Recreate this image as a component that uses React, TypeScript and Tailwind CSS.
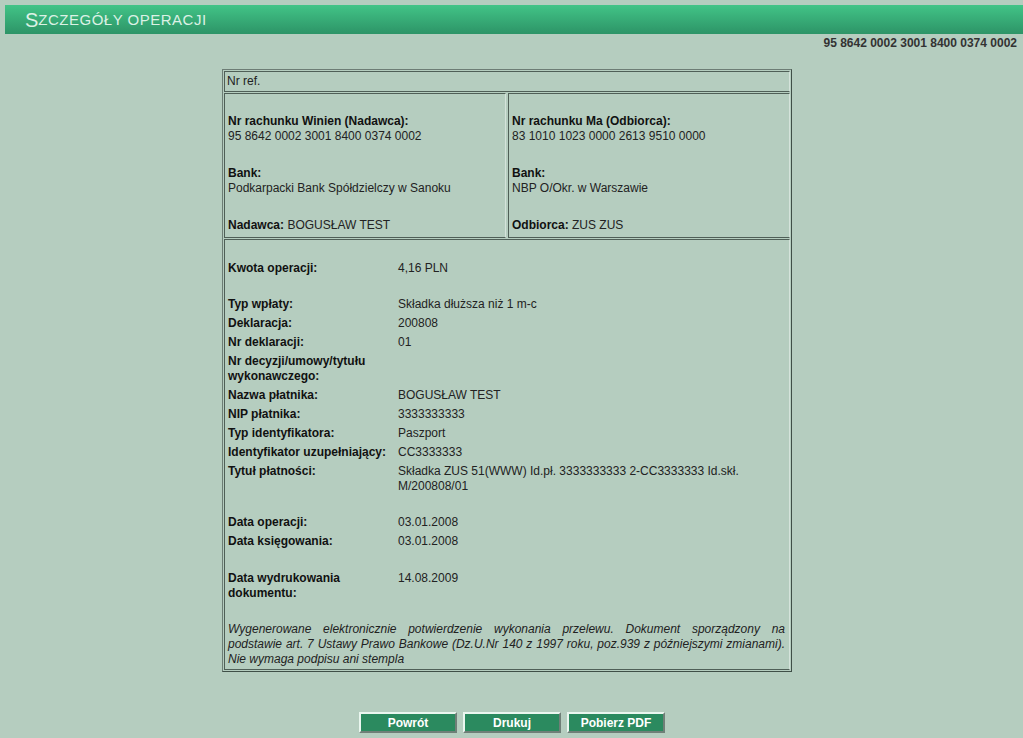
import { memo } from "react";

const rows: { label: string; value?: string; gap?: number }[] = [
  { label: "Kwota operacji:", value: "4,16 PLN" },
  { label: "Typ wpłaty:", value: "Składka dłuższa niż 1 m-c", gap: 17 },
  { label: "Deklaracja:", value: "200808" },
  { label: "Nr deklaracji:", value: "01" },
  { label: "Nr decyzji/umowy/tytułu wykonawczego:" },
  { label: "Nazwa płatnika:", value: "BOGUSŁAW TEST" },
  { label: "NIP płatnika:", value: "3333333333" },
  { label: "Typ identyfikatora:", value: "Paszport" },
  { label: "Identyfikator uzupełniający:", value: "CC3333333" },
  { label: "Tytuł płatności:", value: "Składka ZUS 51(WWW) Id.pł. 3333333333 2-CC3333333 Id.skł. M/200808/01" },
  { label: "Data operacji:", value: "03.01.2008", gap: 17 },
  { label: "Data księgowania:", value: "03.01.2008" },
  { label: "Data wydrukowania dokumentu:", value: "14.08.2009", gap: 18 },
];

function Party({ title, account, bank, whoLabel, who }: { title: string; account: string; bank: string; whoLabel: string; who: string }) {
  return (
    <div className="flex-1 border border-t-[#4f5f57] border-l-[#4f5f57] border-b-[#4f5f57] border-r-[#d5e3db] pl-[3px] pt-[20px] pb-[4px] leading-[15px]">
      <div className="font-bold text-[#111]">{title}</div>
      <div>{account}</div>
      <div className="mt-[22px] font-bold text-[#111]">Bank:</div>
      <div>{bank}</div>
      <div className="mt-[22px]">
        <span className="font-bold text-[#111]">{whoLabel}</span> {who}
      </div>
    </div>
  );
}

function App() {
  const cell = "border border-t-[#4f5f57] border-l-[#4f5f57] border-b-[#4f5f57] border-r-[#d5e3db]";
  const just = "block text-justify [text-align-last:justify]";
  return (
    <div className="min-h-[738px] bg-[#b5cdbf] pt-[5px] text-[12px] text-[#222]" style={{ fontFamily: '"Liberation Sans", Arial, sans-serif' }}>
      <div className="ml-[5px] flex h-[29px] items-center bg-gradient-to-b from-[#42c487] to-[#2d9467] pl-[20px] text-[#dcf1e5]">
        <span className="text-[20px] leading-none">S</span>
        <span className="text-[15px] leading-none tracking-[0.5px]">ZCZEGÓŁY OPERACJI</span>
      </div>
      <div className="pr-[6px] pt-[2px] text-right font-bold leading-[14px] text-[#333]">95 8642 0002 3001 8400 0374 0002</div>

      <div className="ml-[222px] mt-[19px] w-[570px] border border-t-[#6d7d75] border-l-[#6d7d75] border-b-[#3f4f47] border-r-[#3f4f47] p-[1px]">
        <div className={`${cell} h-[21px] pl-[2px] leading-[18px]`}>Nr ref.</div>
        <div className="mt-[1px] flex gap-[2px]">
          <Party title="Nr rachunku Winien (Nadawca):" account="95 8642 0002 3001 8400 0374 0002" bank="Podkarpacki Bank Spółdzielczy w Sanoku" whoLabel="Nadawca:" who=" BOGUSŁAW TEST" />
          <Party title="Nr rachunku Ma (Odbiorca):" account="83 1010 1023 0000 2613 9510 0000" bank="NBP O/Okr. w Warszawie" whoLabel="Odbiorca:" who="ZUS ZUS" />
        </div>
        <div className={`${cell} mt-[1px] pl-[3px] pr-[4px] pt-[19px] pb-[2px] leading-[15px]`}>
          {rows.map((r) => (
            <div key={r.label} className="flex py-[2px]" style={r.gap ? { marginTop: r.gap } : undefined}>
              <div className="w-[170px] shrink-0 pr-[1px] font-bold text-[#111]">{r.label}</div>
              <div className="flex-1 pr-[40px]">{r.value}</div>
            </div>
          ))}
          <p className="mt-[19px] italic">
            <span className={just}>Wygenerowane elektronicznie potwierdzenie wykonania przelewu. Dokument sporządzony na</span>
            <span className={just}>podstawie art. 7 Ustawy Prawo Bankowe (Dz.U.Nr 140 z 1997 roku, poz.939 z późniejszymi zmianami).</span>
            <span className="block">Nie wymaga podpisu ani stempla</span>
          </p>
        </div>
      </div>

      <div className="mt-[40px] flex justify-center gap-[6px] pl-[1px]">
        {["Powrót", "Drukuj", "Pobierz PDF"].map((b) => (
          <button key={b} className="h-[21px] w-[98px] border-2 border-t-[#eaf6ef] border-l-[#eaf6ef] border-b-[#6f7f77] border-r-[#6f7f77] bg-[#2b8a5f] text-[12px] font-bold text-white">
            {b}
          </button>
        ))}
      </div>
    </div>
  );
}
export default memo(App);
